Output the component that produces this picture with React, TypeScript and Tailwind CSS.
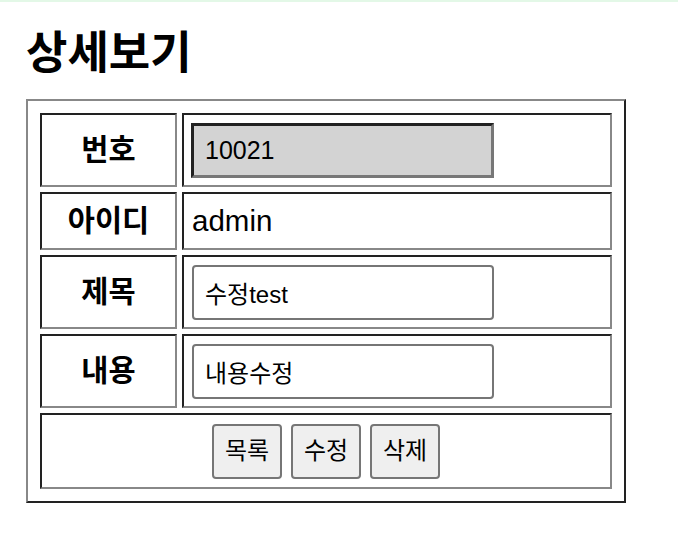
import React from 'react';

const cell =
    'border-2 border-t-[#222] border-l-[#222] border-b-[#888] border-r-[#888] p-0';
const labelCell = `${cell} w-[137px] text-center font-bold text-[29.5px]`;

const textInput =
    'w-[302px] h-[55px] rounded-[4px] border-2 border-[#767676] bg-white px-[11px] text-[24px] text-black outline-none';

function LabelRow({ label, height, children }: { label: string; height: string; children: React.ReactNode }) {
    return (
        <tr className={height}>
            <th className={labelCell}>{label}</th>
            <td className={`${cell} pl-[8px]`}>{children}</td>
        </tr>
    );
}

export default function App() {
    return (
        <div className="min-h-screen bg-white text-black font-['Liberation_Sans','Noto_Sans_CJK_KR',sans-serif]">
            <div className="h-[2px] bg-[#e3f8e7]" />
            <div className="pl-[26px]">
                <h2 className="mt-[18px] h-[60px] text-[45px] font-bold leading-[60px] font-['Noto_Sans_CJK_KR',sans-serif]">
                    상세보기
                </h2>
                <table className="mt-[19px] w-[600px] border-separate border-spacing-[5px] p-[7px] border-2 border-t-[#888] border-l-[#888] border-b-[#222] border-r-[#222]">
                    <tbody>
                        <tr className="h-[74px]">
                            <th className={labelCell}>번호</th>
                            <td className={`${cell} pl-[7px]`}>
                                <input
                                    readOnly
                                    value="10021"
                                    className="block w-[303px] h-[55px] border-[3px] border-t-[#222] border-l-[#222] border-b-[#777] border-r-[#777] bg-[#d3d3d3] px-[11px] text-[25px] outline-none"
                                />
                            </td>
                        </tr>
                        <tr className="h-[58px]">
                            <th className={labelCell}>아이디</th>
                            <td className={`${cell} pl-[8px] text-[29.5px]`}>admin</td>
                        </tr>
                        <LabelRow label="제목" height="h-[74px]">
                            <input readOnly value="수정test" className={`block ${textInput}`} />
                        </LabelRow>
                        <LabelRow label="내용" height="h-[74px]">
                            <input readOnly value="내용수정" className={`block ${textInput}`} />
                        </LabelRow>
                        <tr className="h-[76px]">
                            <td colSpan={2} className={`${cell} text-center`}>
                                <div className="flex justify-center gap-[9px]">
                                    {['목록', '수정', '삭제'].map((b) => (
                                        <button
                                            key={b}
                                            type="button"
                                            className="h-[55px] w-[70px] rounded-[4px] border-2 border-[#767676] bg-[#efefef] text-[24px]"
                                        >
                                            {b}
                                        </button>
                                    ))}
                                </div>
                            </td>
                        </tr>
                    </tbody>
                </table>
            </div>
        </div>
    );
}
